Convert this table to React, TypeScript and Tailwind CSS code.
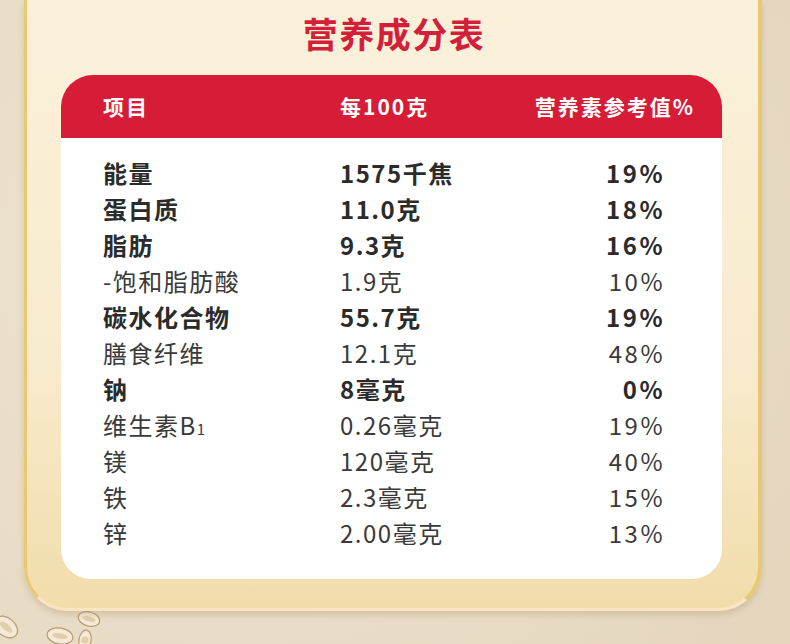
import React from 'react'

type Row = { name: React.ReactNode; amount: string; nrv: string; bold?: boolean }

const ROWS: Row[] = [
  { name: '能量', amount: '1575千焦', nrv: '19%', bold: true },
  { name: '蛋白质', amount: '11.0克', nrv: '18%', bold: true },
  { name: '脂肪', amount: '9.3克', nrv: '16%', bold: true },
  { name: '-饱和脂肪酸', amount: '1.9克', nrv: '10%' },
  { name: '碳水化合物', amount: '55.7克', nrv: '19%', bold: true },
  { name: '膳食纤维', amount: '12.1克', nrv: '48%' },
  { name: '钠', amount: '8毫克', nrv: '0%', bold: true },
  {
    name: (
      <>
        维生素B<span className="text-[15px] tracking-normal">1</span>
      </>
    ),
    amount: '0.26毫克',
    nrv: '19%',
  },
  { name: '镁', amount: '120毫克', nrv: '40%' },
  { name: '铁', amount: '2.3毫克', nrv: '15%' },
  { name: '锌', amount: '2.00毫克', nrv: '13%' },
]

const FONT = "font-['Noto_Sans_CJK_SC','Noto_Sans',sans-serif]"

function Oats() {
  // a few rolled oat flakes scattered under the card
  const flakes = [
    { cx: 6, cy: 627, rx: 13, ry: 9, r: 40 },
    { cx: 60, cy: 636, rx: 13, ry: 8, r: 10 },
    { cx: 89, cy: 619, rx: 11, ry: 7, r: 15 },
    { cx: 85, cy: 640, rx: 6, ry: 10, r: 10 },
  ]
  return (
    <svg className="absolute left-0 top-0 pointer-events-none" width="790" height="644">
      {flakes.map((f, i) => (
        <g key={i} transform={`rotate(${f.r} ${f.cx} ${f.cy})`}>
          <ellipse cx={f.cx} cy={f.cy} rx={f.rx} ry={f.ry} fill="#f3ead9" stroke="#b99a6e" strokeWidth="1.2" />
          <ellipse cx={f.cx} cy={f.cy} rx={f.rx * 0.6} ry={f.ry * 0.35} fill="#e2cfa8" />
        </g>
      ))}
    </svg>
  )
}

export default function App() {
  return (
    <div className={`relative w-[790px] h-[644px] overflow-hidden bg-[radial-gradient(circle_at_30%_40%,#efe5d3,#e4d6bd)] ${FONT}`}>
      <Oats />

      {/* Card */}
      <div className="relative ml-[24px] w-[738px] h-[611px] rounded-b-[44px] border-l-[3px] border-r-[4px] border-b-[3px] border-[#e8c873] border-b-[#fbe4c2] bg-[linear-gradient(180deg,#fbf1db_0%,#f8ebcd_60%,#f1dcaa_100%)] shadow-[0_4px_6px_rgba(150,120,70,0.25)] flex flex-col">
        {/* Title */}
        <div className="h-[75px] flex items-center justify-center pl-[3px]">
          <h1 className="text-[35px] leading-none font-bold tracking-[1.5px] text-[#d31f39] -mt-[10px]">
            营养成分表
          </h1>
        </div>

        {/* Panel */}
        <div className="ml-[34px] w-[661px] h-[504px] bg-white rounded-t-[32px] rounded-b-[30px] flex flex-col overflow-hidden">
          <div className="h-[63px] bg-[#d61c37] flex items-center pl-[42px] pr-[27px] text-white font-bold text-[21px] tracking-[2px]">
            <div className="w-[237px]">项目</div>
            <div className="flex-1">每100克</div>
            <div>营养素参考值%</div>
          </div>

          <div className="pt-[17px] flex flex-col">
            {ROWS.map((row, i) => (
              <div
                key={i}
                className={`h-[36px] flex items-center pl-[42px] pr-[57px] text-[24px] tracking-[1.5px] ${
                  row.bold ? 'font-bold text-[#2b2b2b]' : 'font-normal text-[#3a3a3a]'
                }`}
              >
                <div className="w-[237px] whitespace-nowrap">{row.name}</div>
                <div className="flex-1 whitespace-nowrap">{row.amount}</div>
                <div className="text-right whitespace-nowrap tracking-[2.5px]">{row.nrv}</div>
              </div>
            ))}
          </div>
        </div>
      </div>
    </div>
  )
}
